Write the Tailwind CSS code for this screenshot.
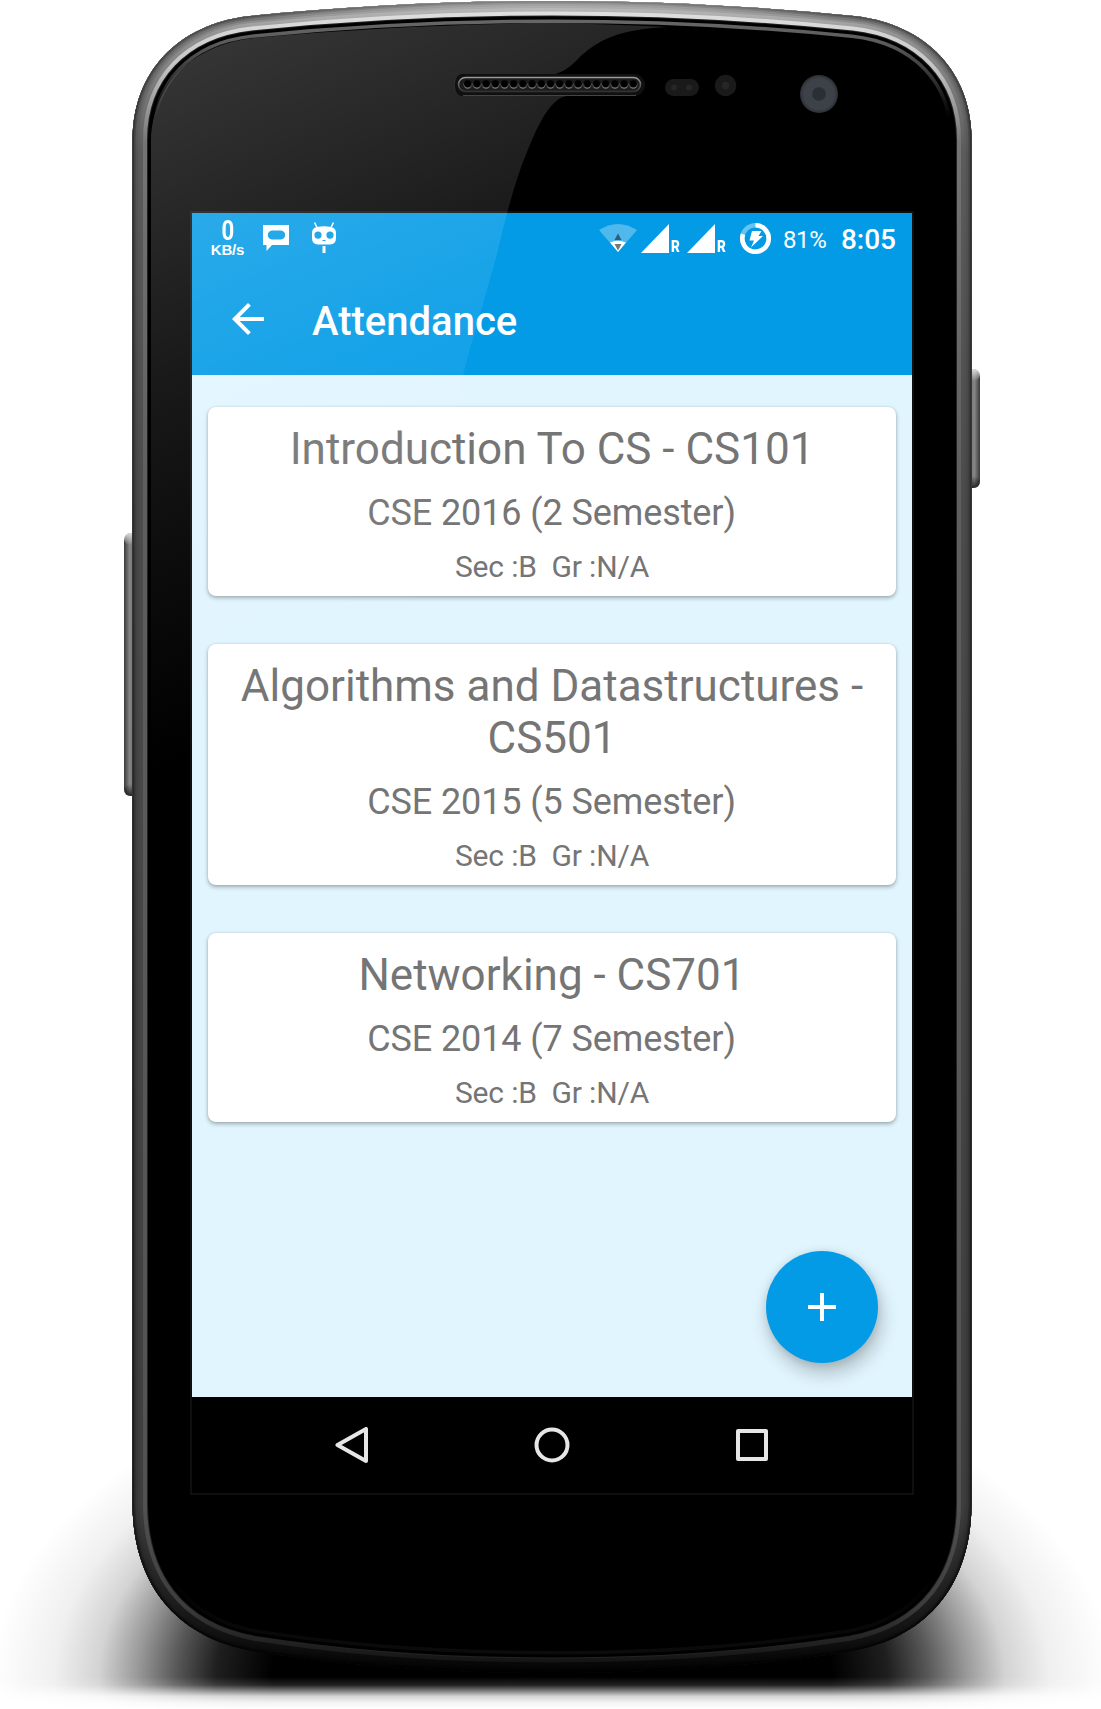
<!DOCTYPE html>
<html lang="en">
<head>
<meta charset="utf-8">
<title>Attendance</title>
<script src="https://cdn.jsdelivr.net/npm/@tailwindcss/browser@4"></script>
</head>
<body class="bg-white">
<div class="relative w-[1101px] h-[1709px] overflow-hidden bg-white pl-48 pt-[213px] font-['Roboto',sans-serif]">

  <!-- device frame -->
  <svg class="absolute inset-0" width="1101" height="1709" viewBox="0 0 1101 1709">
    <defs>
      <path id="body" d="M132.500 140 C132.500 72 178 24 250 16 C350 6 450 1 552 1 C654 1 754 6 854 16 C926 24 971.500 72 971.500 140 V1503 C971.500 1580 932 1636 852 1651 C752 1667 652 1673 552 1673 C452 1673 352 1667 252 1651 C172 1636 132.500 1580 132.500 1503 Z"/>
      <clipPath id="bodyClip"><use href="#body"/></clipPath>
      <radialGradient id="ground" gradientUnits="userSpaceOnUse" cx="0" cy="0" r="1" gradientTransform="translate(552 1680) scale(560 330)">
        <stop offset=".5" stop-color="#000"/><stop offset=".6" stop-color="#000" stop-opacity=".88"/>
        <stop offset=".67" stop-color="#000" stop-opacity=".66"/><stop offset=".74" stop-color="#000" stop-opacity=".4"/>
        <stop offset=".81" stop-color="#000" stop-opacity=".17"/><stop offset=".89" stop-color="#000" stop-opacity=".06"/>
        <stop offset="1" stop-color="#000" stop-opacity="0"/>
      </radialGradient>
      <linearGradient id="fade" gradientUnits="userSpaceOnUse" x1="0" y1="1677" x2="0" y2="1709">
        <stop offset="0" stop-color="#fff"/><stop offset=".25" stop-color="#ddd"/><stop offset=".42" stop-color="#888"/><stop offset=".6" stop-color="#2c2c2c"/><stop offset=".8" stop-color="#0c0c0c"/><stop offset="1" stop-color="#000"/>
      </linearGradient>
      <mask id="groundMask" maskUnits="userSpaceOnUse" x="0" y="1300" width="1101" height="409"><rect y="1300" width="1101" height="409" fill="url(#fade)"/></mask>
      <linearGradient id="g1" gradientUnits="userSpaceOnUse" x1="0" y1="0" x2="0" y2="1673">
        <stop offset="0" stop-color="#888"/><stop offset=".01" stop-color="#505050"/><stop offset=".08" stop-color="#333"/><stop offset=".9" stop-color="#1c1c1c"/><stop offset="1" stop-color="#000"/>
      </linearGradient>
      <linearGradient id="g2" gradientUnits="userSpaceOnUse" x1="0" y1="0" x2="0" y2="1673">
        <stop offset="0" stop-color="#b2b2b2"/><stop offset=".012" stop-color="#777"/><stop offset=".09" stop-color="#545454"/><stop offset=".3" stop-color="#444"/><stop offset=".9" stop-color="#363636"/><stop offset=".96" stop-color="#1a1a1a"/><stop offset="1" stop-color="#020202"/>
      </linearGradient>
      <linearGradient id="g3" gradientUnits="userSpaceOnUse" x1="0" y1="0" x2="0" y2="1673">
        <stop offset="0" stop-color="#c4c4c4"/><stop offset=".02" stop-color="#949494"/><stop offset=".09" stop-color="#5c5c5c"/><stop offset=".3" stop-color="#4c4c4c"/><stop offset=".9" stop-color="#3e3e3e"/><stop offset=".97" stop-color="#161616"/><stop offset="1" stop-color="#040404"/>
      </linearGradient>
      <linearGradient id="g4" gradientUnits="userSpaceOnUse" x1="0" y1="0" x2="0" y2="1673">
        <stop offset="0" stop-color="#e4e4e4"/><stop offset=".04" stop-color="#c4c4c4"/><stop offset=".085" stop-color="#747474"/><stop offset=".3" stop-color="#5e5e5e"/><stop offset=".9" stop-color="#525252"/><stop offset=".96" stop-color="#3c3c3c"/><stop offset="1" stop-color="#0c0c0c"/>
      </linearGradient>
      <linearGradient id="g5" gradientUnits="userSpaceOnUse" x1="0" y1="0" x2="0" y2="1673">
        <stop offset="0" stop-color="#707070"/><stop offset=".025" stop-color="#5c5c5c"/><stop offset=".05" stop-color="#2c2c2c"/><stop offset=".07" stop-color="#000"/><stop offset=".94" stop-color="#000"/><stop offset="1" stop-color="#0e0e0e"/>
      </linearGradient>
      <linearGradient id="btnL" x1="0" x2="1" y1="0" y2="0"><stop offset="0" stop-color="#3a3a3a"/><stop offset=".35" stop-color="#868686"/><stop offset="1" stop-color="#555"/></linearGradient>
      <linearGradient id="btnR" x1="1" x2="0" y1="0" y2="0"><stop offset="0" stop-color="#3a3a3a"/><stop offset=".35" stop-color="#868686"/><stop offset="1" stop-color="#555"/></linearGradient>
      <linearGradient id="cap" x1="0" x2="0" y1="0" y2="1"><stop offset="0" stop-color="#ddd"/><stop offset="1" stop-color="#ddd" stop-opacity="0"/></linearGradient>
      <linearGradient id="foot" x1="0" x2="0" y1="0" y2="1"><stop offset="0" stop-color="#000" stop-opacity="0"/><stop offset="1" stop-color="#000" stop-opacity=".7"/></linearGradient>
      <linearGradient id="slot" x1="0" x2="0" y1="0" y2="1"><stop offset="0" stop-color="#999"/><stop offset="1" stop-color="#333"/></linearGradient>
      <radialGradient id="lens"><stop offset=".8" stop-color="#3d4148"/><stop offset="1" stop-color="#2c3036"/></radialGradient>
      <pattern id="holes" patternUnits="userSpaceOnUse" x="463.100" y="79" width="9.200" height="10">
        <circle cx="4.600" cy="5.600" r="4.100" fill="#7c7c7c"/><circle cx="4.600" cy="4.800" r="3.700" fill="#000"/>
      </pattern>
    </defs>

    <rect y="1300" width="1101" height="409" fill="url(#ground)" mask="url(#groundMask)"/>

    <rect x="124" y="533" width="16" height="263" rx="7" fill="url(#btnL)"/>
    <rect x="124" y="533" width="16" height="12" rx="6" fill="url(#cap)"/>
    <rect x="124" y="784" width="16" height="12" rx="6" fill="url(#foot)"/>
    <rect x="964" y="369" width="16" height="119" rx="7" fill="url(#btnR)"/>
    <rect x="964" y="369" width="16" height="12" rx="6" fill="url(#cap)"/>
    <rect x="964" y="476" width="16" height="12" rx="6" fill="url(#foot)"/>

    <use href="#body" fill="#000"/>
    <g clip-path="url(#bodyClip)" fill="none">
      <use href="#body" stroke="url(#g5)" stroke-width="44"/>
      <use href="#body" stroke="#000" stroke-width="37"/>
      <use href="#body" stroke="#222" stroke-width="31"/>
      <use href="#body" stroke="url(#g4)" stroke-width="29"/>
      <use href="#body" stroke="url(#g3)" stroke-width="21"/>
      <use href="#body" stroke="url(#g2)" stroke-width="14" stroke-opacity=".5"/>
      <use href="#body" stroke="url(#g2)" stroke-width="10"/>
      <use href="#body" stroke="url(#g1)" stroke-width="6" stroke-opacity=".5"/>
      <use href="#body" stroke="url(#g1)" stroke-width="3"/>
    </g>

    <!-- earpiece -->
    <rect x="454" y="74" width="191" height="22" rx="11" fill="#101010"/>
    <path d="M463 95.500H636" stroke="#444" stroke-width="1.200"/>
    <rect x="458.500" y="77.500" width="182" height="14" rx="7" fill="#1c1c1c" stroke="url(#slot)" stroke-width="1.500"/>
    <rect x="463.100" y="79" width="174.800" height="10" fill="url(#holes)"/>

    <!-- sensors and camera -->
    <rect x="665" y="79" width="34" height="17" rx="8.500" fill="#1a1a1a"/>
    <circle cx="674" cy="87.500" r="3" fill="#262626"/><circle cx="689" cy="87.500" r="3" fill="#262626"/>
    <circle cx="725.600" cy="85.500" r="10.700" fill="#1a1a1a"/><circle cx="725.600" cy="85.500" r="3.700" fill="#262626"/>
    <circle cx="819" cy="94" r="19" fill="url(#lens)"/><circle cx="819" cy="94" r="6.800" fill="#2b2e34"/>

    <rect x="191" y="212" width="722" height="1282" fill="none" stroke="#141414" stroke-width="1.500"/>
  </svg>

  <!-- screen -->
  <div class="relative flex h-[1280px] w-[720px] flex-col overflow-hidden bg-[#e1f5fe]">
    <header class="h-[162px] shrink-0 bg-[#039be6] text-white">
      <div class="flex h-[50px] items-center justify-between pl-[19px] pr-[16px]">
        <div class="flex items-center">
          <div class="flex w-[33px] flex-col items-center whitespace-nowrap">
            <span class="text-[27px] leading-[23px] font-bold scale-x-[0.82]">0</span>
            <span class="font-['Liberation_Sans',sans-serif] text-[15px] leading-[14px] font-bold tracking-[-0.2px]">KB/s</span>
          </div>
          <svg class="ml-[19px]" width="26" height="26" viewBox="0 0 26 26"><path fill="#fff" fill-rule="evenodd" d="M0 0H26V20H9L3.500 26V20H0ZM9 5.500C3.500 5.500 3.500 14.500 9 14.500H18C23.500 14.500 23.500 5.500 18 5.500Z"/></svg>
          <svg class="ml-[23px]" width="24" height="32" viewBox="0 0 24 32"><path d="M2.500 .5L5 5.500M21.500 .5L19 5.500" stroke="#fff" stroke-width="1.500"/><path fill="#fff" fill-rule="evenodd" d="M5 5Q12 3.500 19 5Q24 6 24 11V16Q24 22 18 22.500H6Q0 22 0 16V11Q0 6 5 5ZM6 9.500A3.600 3.600 0 1 0 6 16.700A3.600 3.600 0 1 0 6 9.500ZM18 9.500A3.600 3.600 0 1 0 18 16.700A3.600 3.600 0 1 0 18 9.500ZM10.500 18V19H13.500V18Z"/><path fill="#fff" d="M10.500 24H13.500V31H10.500Z"/></svg>
        </div>
        <div class="flex items-center">
          <svg width="38" height="28" viewBox="0 0 38 28"><path fill="#fff" fill-opacity=".3" d="M0 6Q19 -6 38 6L19 28Z"/><path fill="#fff" d="M11 18.500Q19 15 27 18.500L19 28Z"/><path fill="#2a5f7d" d="M15.500 16L19 9.500L22.500 16Z"/><path fill="#777" d="M15.500 20H22.500L19 26.500Z"/></svg>
          <svg class="ml-[4px]" width="28" height="29" viewBox="0 0 28 29"><path fill="#fff" d="M28 0V29H0Z"/></svg>
          <span class="ml-[2px] mt-[17px] w-[9px] origin-left scale-x-[0.8] text-[17px] leading-none font-black">R</span>
          <svg class="ml-[7px]" width="28" height="29" viewBox="0 0 28 29"><path fill="#fff" d="M28 0V29H0Z"/></svg>
          <span class="ml-[2px] mt-[17px] w-[9px] origin-left scale-x-[0.8] text-[17px] leading-none font-black">R</span>
          <svg class="ml-[14px]" width="31" height="31" viewBox="0 0 31 31"><circle cx="15.500" cy="15.500" r="13.200" fill="none" stroke="#fff" stroke-opacity=".4" stroke-width="4.600"/><path d="M15.500 2.300A13.200 13.200 0 1 1 3 11.300" fill="none" stroke="#fff" stroke-width="4.600"/><path fill="#fff" d="M12 8H21.500L18.500 13H23L11 24.500L14 17.500H9.500Z"/></svg>
          <span class="ml-[12px] mt-[3px] w-[44px] whitespace-nowrap text-[24px] leading-none tracking-[-0.3px]">81%</span>
          <span class="ml-[14px] mt-[4px] whitespace-nowrap text-[28px] leading-none font-medium">8:05</span>
        </div>
      </div>
      <div class="flex h-28 items-center pl-8">
        <svg width="48" height="48" viewBox="0 0 24 24" fill="#fff"><path d="M20 11H7.830l5.590-5.590L12 4l-8 8 8 8 1.410-1.410L7.830 13H20v-2z"/></svg>
        <h1 class="ml-10 pt-[6px] text-[40px] leading-none font-medium">Attendance</h1>
      </div>
    </header>

    <main class="flex flex-1 flex-col gap-12 px-4 pt-8 text-center text-[#757575]">
      <section class="flex h-[189px] flex-col rounded-lg bg-white pt-4 shadow-[0_2px_4px_rgba(0,0,0,0.3),0_0_2px_rgba(0,0,0,0.12)]">
        <h2 class="text-[44px] leading-[52px]">Introduction To CS - CS101</h2>
        <p class="mt-[17px] -ml-px text-[36px] leading-[42px] tracking-[-0.1px]">CSE 2016 (2 Semester)</p>
        <p class="mt-[15px] whitespace-pre text-[30px] leading-[35px] tracking-[-0.15px]">Sec :B  Gr :N/A</p>
      </section>
      <section class="flex h-[241px] flex-col rounded-lg bg-white pt-4 shadow-[0_2px_4px_rgba(0,0,0,0.3),0_0_2px_rgba(0,0,0,0.12)]">
        <h2 class="text-[44px] leading-[52px]">Algorithms and Datastructures -<br>CS501</h2>
        <p class="mt-[17px] -ml-px text-[36px] leading-[42px] tracking-[-0.1px]">CSE 2015 (5 Semester)</p>
        <p class="mt-[15px] whitespace-pre text-[30px] leading-[35px] tracking-[-0.15px]">Sec :B  Gr :N/A</p>
      </section>
      <section class="flex h-[189px] flex-col rounded-lg bg-white pt-4 shadow-[0_2px_4px_rgba(0,0,0,0.3),0_0_2px_rgba(0,0,0,0.12)]">
        <h2 class="text-[44px] leading-[52px]">Networking - CS701</h2>
        <p class="mt-[17px] -ml-px text-[36px] leading-[42px] tracking-[-0.1px]">CSE 2014 (7 Semester)</p>
        <p class="mt-[15px] whitespace-pre text-[30px] leading-[35px] tracking-[-0.15px]">Sec :B  Gr :N/A</p>
      </section>
    </main>

    <button class="absolute right-[34px] bottom-[130px] flex size-28 items-center justify-center rounded-full bg-[#039be6] shadow-[3px_10px_18px_rgba(0,0,0,0.24),0_1px_8px_rgba(0,0,0,0.1)]" aria-label="Add">
      <svg width="28" height="28" viewBox="0 0 28 28"><path d="M14 0V28M0 14H28" stroke="#fff" stroke-width="4"/></svg>
    </button>

    <nav class="flex h-24 shrink-0 items-center justify-between bg-black px-[142px]">
      <svg width="36" height="36" viewBox="0 0 36 36" fill="none" stroke="#e6e6e6" stroke-width="4" stroke-linejoin="round"><path d="M3.500 18L32 2V34Z"/></svg>
      <svg width="36" height="36" viewBox="0 0 36 36" fill="none" stroke="#e6e6e6" stroke-width="4"><circle cx="18" cy="18" r="15.500"/></svg>
      <svg width="36" height="36" viewBox="0 0 36 36" fill="none" stroke="#e6e6e6" stroke-width="4" stroke-linejoin="round"><path d="M4 4H32V32H4Z"/></svg>
    </nav>
  </div>

  <!-- glass reflection -->
  <svg class="pointer-events-none absolute inset-0" width="1101" height="1709" viewBox="0 0 1101 1709">
    <defs><linearGradient id="gloss" gradientUnits="userSpaceOnUse" x1="200" y1="40" x2="460" y2="640">
      <stop offset="0" stop-color="#fff" stop-opacity=".21"/><stop offset=".45" stop-color="#fff" stop-opacity=".1"/><stop offset=".7" stop-color="#fff" stop-opacity=".05"/><stop offset="1" stop-color="#fff" stop-opacity="0"/>
    </linearGradient></defs>
    <path fill="url(#gloss)" d="M151 140C153 84 192 45 254 38C350 29 450 24 552 23C610 24 640 26 668 27C620 29 596 40 577 60C568 69 562 72 555 74H463C452 74 452 96 463 96H566C545 100 530 145 520 170C510 200 503 228 498 250C482 310 470 345 463 376L340 880H151Z"/>
  </svg>
</div>
</body>
</html>
